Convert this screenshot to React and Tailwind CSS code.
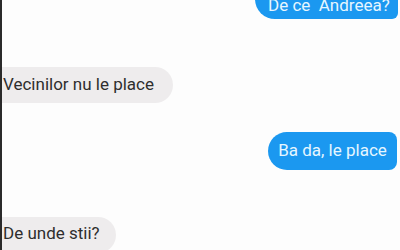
export default function App() {
  return (
    <div
      className="relative h-[250px] w-[400px] overflow-hidden border-l-2 border-[#2a2a2a] bg-[#fdfdfd]"
      style={{ fontFamily: "Roboto, 'Liberation Sans', sans-serif" }}
    >
      <div className="flex flex-col">
        <div className="-mt-[21px] mr-[2px] flex justify-end">
          <div className="flex h-[40px] w-[143px] items-end rounded-l-[20px] rounded-tr-[20px] rounded-br-[6px] bg-[#1b98f0] pb-[4px] pl-[13px] text-[17px] leading-[20px] text-[#e6f6ff]">
            De ce&nbsp; Andreea?
          </div>
        </div>
        <div className="mt-[48px] flex">
          <div className="flex h-[36px] w-[171px] items-center rounded-r-[18px] bg-[#eeeced] pl-[1px] text-[17px] text-[#2e2e2e]">
            Vecinilor nu le place
          </div>
        </div>
        <div className="mt-[29px] mr-[3px] flex justify-end">
          <div className="flex h-[38px] w-[129px] items-center justify-center rounded-l-[19px] rounded-r-[8px] bg-[#1b98f0] text-[17px] text-[#e6f6ff]">
            Ba da, le place
          </div>
        </div>
        <div className="mt-[47px] flex">
          <div className="flex h-[36px] w-[114px] items-center rounded-r-[18px] bg-[#eeeced] pb-[2px] pl-[1px] text-[17px] text-[#2e2e2e]">
            De unde stii?
          </div>
        </div>
      </div>
    </div>
  );
}
